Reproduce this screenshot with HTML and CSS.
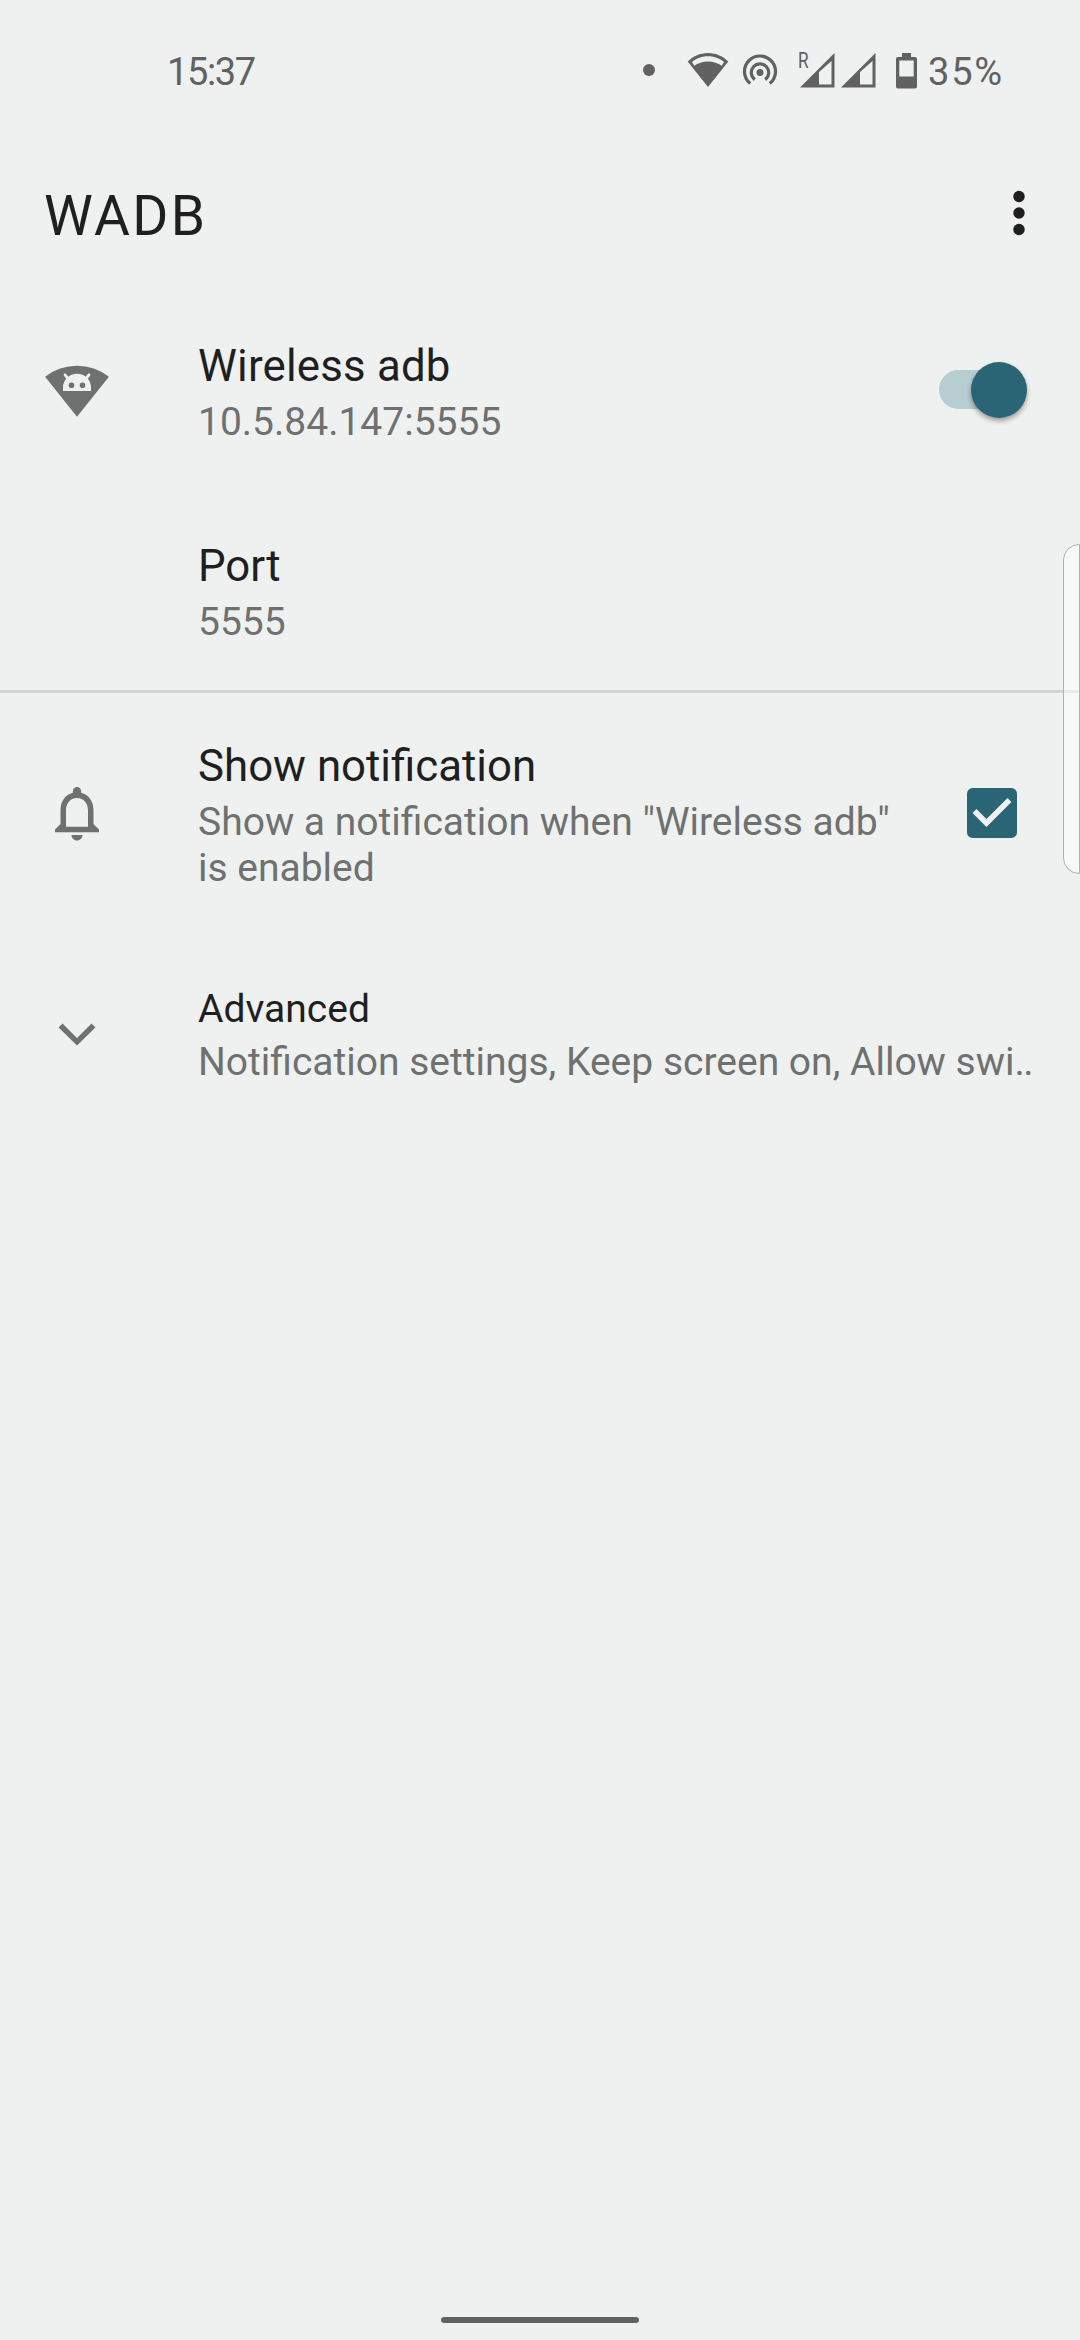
FILE: index.html
```html
<!DOCTYPE html>
<html lang="en">
<head>
<meta charset="utf-8">
<title>WADB</title>
<link rel="stylesheet" href="styles.css">
</head>
<body>
<div class="screen">
  <header class="status">
    <span class="clock">15:37</span>
    <div class="status-icons">
      <svg class="dot" width="12" height="12" viewBox="0 0 12 12"><circle cx="6" cy="6" r="6"/></svg>
      <svg class="wifi" width="42" height="36" viewBox="0 0 42 36"><path fill-rule="evenodd" d="M21 1C12.700 1 5.800 4.500.7 9.500L21 35 41.300 9.500C36.200 4.500 29.300 1 21 1zM21 4.300C28 4.300 33.200 7 37 9.900L34.800 13.700C31 11.200 26.500 9.500 21 9.500S11 11.200 7.200 13.700L5 9.900C8.800 7 14 4.300 21 4.300z"/></svg>
      <svg class="hotspot" width="36" height="36" viewBox="0 0 36 36"><circle cx="18" cy="19.500" r="3.500"/><g fill="none" stroke="#616161" stroke-width="3.200"><path d="M12.800 26.600A8.700 8.700 0 1 1 23.200 26.600"/><path d="M8.200 30.500A15.500 15.500 0 1 1 27.800 30.500"/></g></svg>
      <span class="roaming">R</span>
      <svg class="signal" width="35" height="35" viewBox="0 0 35 35"><path fill-rule="evenodd" d="M0 34.500L34.500 0V34.500zM19 19V31.500H31.500V8z"/></svg>
      <svg class="signal second" width="35" height="35" viewBox="0 0 35 35"><path fill-rule="evenodd" d="M0 34.500L34.500 0V34.500zM19 19V31.500H31.500V8z"/></svg>
      <svg class="battery" width="21" height="36" viewBox="0 0 21 36"><path fill-rule="evenodd" d="M6 0h9v4h4a2 2 0 0 1 2 2v27.500a2 2 0 0 1-2 2H2a2 2 0 0 1-2-2V6a2 2 0 0 1 2-2h4zM3.300 7.400V23.600H17.700V7.400z"/></svg>
      <span class="percent">35%</span>
    </div>
  </header>

  <div class="toolbar">
    <h1>WADB</h1>
    <svg class="more" width="12" height="46" viewBox="0 0 12 46"><circle cx="6" cy="6.500" r="5.700"/><circle cx="6" cy="23" r="5.700"/><circle cx="6" cy="39.500" r="5.700"/></svg>
  </div>

  <main>
    <section class="row">
      <svg class="icon" viewBox="0 0 66 66"><path d="M1.100 16.700A51.700 51.700 0 0 1 64.900 16.700L33 56.700z"/><path class="cut" d="M19 31v-3.500a14 13.700 0 0 1 28 0V31z"/><path class="antenna" d="M21 14.800l4 5M45 14.800l-4 5"/><circle cx="27.500" cy="25.200" r="2.800"/><circle cx="38.500" cy="25.200" r="2.800"/></svg>
      <div class="text"><div class="title wireless">Wireless adb</div><div class="summary">10.5.84.147:5555</div></div>
      <div class="switch"><div class="thumb"></div></div>
    </section>
    <section class="row divided">
      <div class="text"><div class="title">Port</div><div class="summary">5555</div></div>
    </section>
    <section class="row tall">
      <svg class="icon" viewBox="0 0 24 24"><path d="M12 22c1.100 0 2-.9 2-2h-4c0 1.100.9 2 2 2zm6-6v-5c0-3.070-1.630-5.640-4.500-6.320V4c0-.83-.67-1.500-1.500-1.500s-1.500.67-1.500 1.500v.68C7.640 5.360 6 7.920 6 11v5l-2 2v1h16v-1l-2-2zm-2 1H8v-6c0-2.480 1.510-4.500 4-4.500s4 2.020 4 4.500v6z"/></svg>
      <div class="text"><div class="title">Show notification</div><div class="summary">Show a notification when "Wireless adb"<br>is enabled</div></div>
      <svg class="checkbox" viewBox="3 3 18 18"><rect x="3" y="3" width="18" height="18" rx="2"/><path d="M10 17l-5-5 1.410-1.410L10 14.170l7.590-7.590L19 8z"/></svg>
    </section>
    <section class="row advanced">
      <svg class="icon" viewBox="0 0 66 66"><path d="M18.500 23.600L33 38 47.500 23.600 51.400 27.500 33 45.600 14.600 27.500z"/></svg>
      <div class="text"><div class="title small">Advanced</div><div class="summary">Notification settings, Keep screen on, Allow swi<span class="dots">..</span></div></div>
    </section>
  </main>
  <div class="home"></div>
  <div class="edge-panel"></div>
</div>
</body>
</html>
```

FILE: styles.css
```css
* { box-sizing: border-box; }
body { margin: 0; background: #eef1f0; font-family: Roboto, sans-serif; }
svg { display: block; flex: none; }

.screen {
  position: relative;
  display: flex;
  flex-direction: column;
  width: 1080px;
  height: 2340px;
  overflow: hidden;
  color: #1f1f1f;
}

.status {
  display: flex;
  justify-content: space-between;
  height: 140px;
  padding: 48px 77px 0 167px;
  color: #616161;
  fill: #616161;
  font-size: 38px;
  line-height: 46px;
}
.clock { margin-top: 1px; letter-spacing: -1.4px; }
.status-icons { display: flex; align-items: flex-start; }
.dot { margin-top: 16px; }
.wifi { margin: 4px 0 0 32px; }
.hotspot { margin: 5px 0 0 13px; }
.roaming { width: 13px; margin: 3px -11px 0 20px; font-size: 22px; line-height: 20px; transform: scaleX(.78); transform-origin: left; }
.signal { margin-top: 5px; }
.second { margin-left: 6px; }
.battery { margin: 5px 0 0 20px; }
.percent { width: 75px; margin: 1px 0 0 11px; letter-spacing: 1.8px; white-space: nowrap; }

.toolbar {
  display: flex;
  justify-content: space-between;
  height: 153px;
  padding: 41px 55px 0 44px;
}
h1 { margin: 2px 0 0; font-size: 55px; font-weight: 400; line-height: 66px; letter-spacing: 2.4px; }
.more { margin-top: 9px; fill: #1f1f1f; }

main { flex: 1; }
.row {
  display: grid;
  grid-template-columns: 66px 1fr auto;
  column-gap: 88px;
  height: 200px;
  padding: 0 44px;
}
.text { grid-column: 2; padding-top: 47px; white-space: nowrap; }
.title { margin-bottom: 7px; font-size: 43.8px; line-height: 52px; }
.wireless { letter-spacing: .2px; }
.small { font-size: 39px; line-height: 46px; }
.summary { color: #6e7170; font-size: 39px; line-height: 46px; }
.dots { letter-spacing: -1.5px; }
.icon { width: 66px; height: 66px; align-self: center; fill: #6e7170; }
.icon .cut { fill: #eef1f0; }
.icon .antenna { fill: none; stroke: #eef1f0; stroke-width: 2.8; stroke-linecap: round; }
.divided { border-bottom: 3px solid #d2d4d3; }
.tall { height: 246px; column-gap: 0; grid-template-columns: 66px 1fr 50px; padding-right: 63px; }
.tall .text { margin-left: 88px; }
.tall .icon { margin-top: -6px; }
.advanced { height: 187px; }

.switch {
  align-self: center;
  display: flex;
  align-items: center;
  justify-content: flex-end;
  width: 80px;
  height: 39px;
  margin: -7px 17px 0 0;
  border-radius: 20px;
  background: #b8cdd1;
}
.thumb {
  flex: none;
  width: 56px;
  height: 56px;
  margin-right: -8px;
  border-radius: 50%;
  background: #2a6575;
  box-shadow: 0 3px 5px rgba(0, 0, 0, .35);
}
.checkbox { width: 50px; height: 50px; align-self: center; margin-top: -6px; }
.checkbox rect { fill: #2a6575; }
.checkbox path { fill: #eef1f0; }

.home { width: 198px; height: 6px; margin: 0 auto 17px; border-radius: 3px; background: #616161; }

.edge-panel {
  position: absolute;
  top: 544px;
  right: 0;
  width: 17px;
  height: 330px;
  border: 1px solid #b0b2b1;
  border-radius: 16px 0 0 16px;
  background: rgba(255, 255, 255, .5);
}
```
